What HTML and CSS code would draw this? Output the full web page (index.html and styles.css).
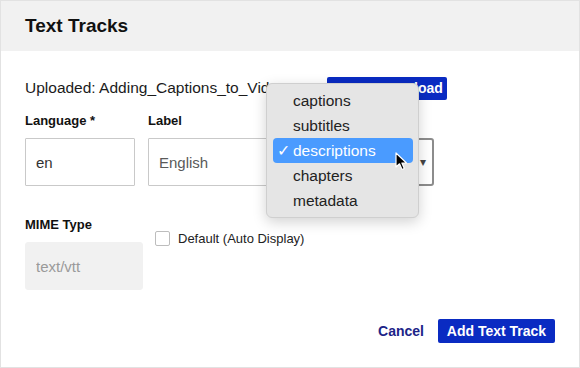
FILE: index.html
```html
<!DOCTYPE html>
<html lang="en">
<head>
  <meta charset="UTF-8" />
  <title>Text Tracks</title>
  <link rel="stylesheet" href="styles.css">
</head>
<body>
  <div class="dialog">
    <div class="dialog-header">
      <h2>Text Tracks</h2>
    </div>

    <div class="dialog-body">
      <div class="upload-row">
        <span class="upload-name">Uploaded: Adding_Captions_to_Video.vtt</span>
        <button class="btn btn-primary btn-small">Remove Upload</button>
      </div>

      <div class="field-row">
        <div class="field field-lang">
          <label>Language *</label>
          <input type="text" value="en" />
        </div>
        <div class="field field-label">
          <label>Label</label>
          <input type="text" class="muted" value="English" />
        </div>
        <div class="field field-kind">
          <label></label>
          <div class="select-box">
            <span class="arrow">&#9662;</span>
          </div>
        </div>
      </div>

      <div class="field-row second">
        <div class="field field-mime">
          <label>MIME Type</label>
          <input type="text" value="text/vtt" disabled />
        </div>
        <label class="check">
          <span class="box"></span>
          Default (Auto Display)
        </label>
      </div>

      <div class="actions">
        <button class="btn btn-link">Cancel</button>
        <button class="btn btn-primary">Add Text Track</button>
      </div>
    </div>

    <ul class="popup">
      <li>captions</li>
      <li>subtitles</li>
      <li class="selected"><span class="tick">&#10003;</span>descriptions</li>
      <li>chapters</li>
      <li>metadata</li>
    </ul>

    <svg class="cursor" width="14" height="20" viewBox="0 0 14 20">
      <path d="M1 1 L1 15 L4.5 11.8 L7 17.5 L9.3 16.5 L6.9 11 L11.5 11 Z" fill="#000" stroke="#fff" stroke-width="1.2" stroke-linejoin="round"/>
    </svg>
  </div>
</body>
</html>
```

FILE: styles.css
```css
* {
  box-sizing: border-box;
}

body {
  margin: 0;
  font-family: "Liberation Sans", Arial, sans-serif;
  color: #1b1b1b;
  background: #fff;
}

.dialog {
  position: relative;
  width: 580px;
  height: 368px;
  border: 1px solid #e2e2e2;
  display: flex;
  flex-direction: column;
  overflow: hidden;
}

.dialog-header {
  height: 50px;
  flex: none;
  background: #f1f1f1;
  padding: 0 24px;
  display: flex;
  align-items: center;
}

.dialog-header h2 {
  margin: 0;
  font-size: 19px;
  font-weight: 700;
  color: #111;
}

.dialog-body {
  flex: 1;
  padding: 25px 24px 24px;
  display: flex;
  flex-direction: column;
}

.upload-row {
  display: flex;
  align-items: center;
  gap: 8px;
  height: 24px;
  font-size: 15.5px;
  white-space: nowrap;
}

.upload-name {
  width: 294px;
  overflow: hidden;
  text-overflow: ellipsis;
}

.btn {
  font-family: inherit;
  font-weight: 700;
  font-size: 14px;
  border: none;
  cursor: pointer;
}

.btn-primary {
  background: #0a2bc2;
  color: #fff;
  border-radius: 2px;
  padding: 0 10px;
  height: 24px;
}

.btn-small {
  height: 23px;
  width: 120px;
}

.btn-link {
  background: none;
  color: #1c2488;
  padding: 0;
}

.field-row {
  display: flex;
  gap: 13px;
  margin-top: 13px;
}

.field {
  display: flex;
  flex-direction: column;
  gap: 8px;
}

.field label {
  font-size: 13px;
  font-weight: 700;
  color: #111;
  height: 17px;
}

.field input,
.select-box {
  height: 48px;
  border: 1px solid #c9c9c9;
  border-radius: 1px;
  padding: 0 10px;
  font-family: inherit;
  font-size: 15px;
  color: #333;
  background: #fff;
}

.field input.muted {
  color: #5a5a5a;
}

.field-lang {
  width: 110px;
}

.field-label {
  width: 143px;
}

.field-kind {
  width: 130px;
}

.select-box {
  display: flex;
  align-items: center;
  justify-content: flex-end;
  border: 2px solid #8c8c8c;
  border-radius: 3px;
  padding-right: 6px;
}

.arrow {
  font-size: 12px;
  color: #444;
}

.field-row.second {
  margin-top: 31px;
  gap: 12px;
}

.field-mime {
  width: 118px;
}

.field-mime input {
  background: #f1f1f1;
  border-color: #f1f1f1;
  border-radius: 3px;
  color: #9a9a9a;
}

.check {
  display: flex;
  align-items: center;
  gap: 8px;
  font-size: 13px;
  color: #222;
  height: 16px;
  margin-top: 13px;
}

.check .box {
  width: 15px;
  height: 15px;
  border: 1px solid #bdbdbd;
  border-radius: 2px;
  background: #fff;
}

.actions {
  margin-top: auto;
  display: flex;
  justify-content: flex-end;
  align-items: center;
  gap: 14px;
}

.actions .btn-primary {
  width: 117px;
  padding: 0;
}

.popup {
  position: absolute;
  left: 265px;
  top: 82px;
  width: 153px;
  height: 135px;
  margin: 0;
  padding: 4px 5px 4px 6px;
  list-style: none;
  background: #e5e5e5;
  border: 1px solid #cfcfcf;
  border-radius: 6px;
  box-shadow: 0 4px 14px rgba(0, 0, 0, 0.18);
  font-family: "Liberation Sans", Arial, sans-serif;
  font-size: 15.5px;
  color: #222;
}

.popup li {
  height: 25px;
  line-height: 25px;
  padding-left: 20px;
  border-radius: 4px;
  position: relative;
}

.popup li.selected {
  background: #4a9bff;
  color: #fff;
}

.tick {
  position: absolute;
  left: 4px;
  font-size: 16px;
}

.cursor {
  position: absolute;
  left: 394px;
  top: 151px;
}
```
